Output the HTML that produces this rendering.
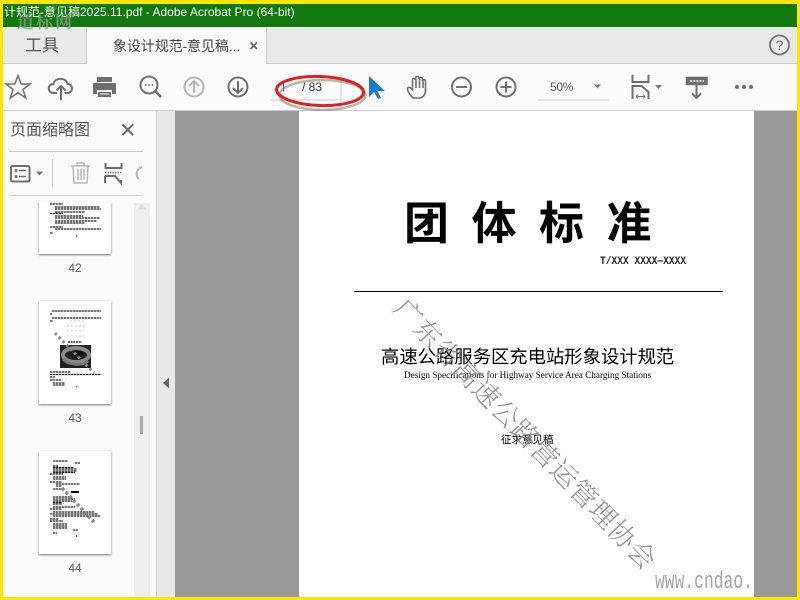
<!DOCTYPE html>
<html><head><meta charset="utf-8"><style>
html,body{margin:0;padding:0;width:800px;height:600px;overflow:hidden;background:#fff}
*{box-sizing:border-box}
.a{position:absolute}
body{font-family:"Liberation Sans","Noto Sans CJK SC",sans-serif;position:relative}
svg{position:absolute;overflow:visible}
.th{position:absolute;left:39px;width:72px;background:#fff;box-shadow:0 1px 2px rgba(0,0,0,.55)}
.n{position:absolute;left:60px;width:30px;text-align:center;font-size:12px;color:#555}
</style></head><body>
<div class="a" style="left:0;top:27px;width:800px;height:37px;background:#e9e9e9;border-bottom:1px solid #ccc"></div>
<div class="a" style="left:0;top:4px;width:800px;height:23px;background:#11790f"></div>
<div class="a" style="left:4px;top:2px;color:#fff;font-size:12px;line-height:20px;white-space:nowrap">计规范-意见稿2025.11.pdf - Adobe Acrobat Pro (64-bit)</div>
<div class="a" style="left:17px;top:10px;color:#8f9f88;font:bold 17px/22px 'Noto Serif CJK SC',serif;letter-spacing:2px;opacity:.8;white-space:nowrap">道标网</div>
<div class="a" style="left:86px;top:28px;width:181px;height:36px;background:#fbfbfb;border-left:1px solid #ccc;border-right:1px solid #ccc"></div>
<div class="a" style="left:25px;top:35px;font-size:17px;line-height:22px;color:#555">工具</div>
<div class="a" style="left:113px;top:37px;font-size:14px;line-height:18px;letter-spacing:-.1px;color:#444;white-space:nowrap">象设计规范-意见稿...</div>
<svg style="left:249px;top:41px" width="10" height="10"><path d="M1.500 1.500L8 8M8 1.500L1.500 8" stroke="#666" stroke-width="1.800"/></svg>
<svg style="left:769px;top:34px" width="22" height="22"><circle cx="10.500" cy="11" r="9.500" fill="none" stroke="#707070" stroke-width="1.800"/><text x="10.500" y="16" text-anchor="middle" font-size="14" fill="#707070" font-family="Liberation Sans">?</text></svg>
<div class="a" style="left:0;top:64px;width:800px;height:46px;background:#fcfcfc"></div>
<div class="a" style="left:0;top:110px;width:800px;height:1px;background:#ccc"></div>

<svg style="left:0;top:70px" width="800" height="36" fill="none" stroke="#6e6e6e" stroke-width="1.800">
<path d="M18 5.500l3.200 8.500h8.800l-7 5.500 2.700 8.500-7.700-5.300-7.700 5.300 2.700-8.500-7-5.500h8.800z" stroke-width="1.500"/>
<path d="M57 23h-3c-7 0-7-9-.500-9 1-7 13-7 14 0 6 0 6 9 0 9h-3" stroke-width="2"/><path d="M61 30V16M56.500 20.500l4.500-4.500 4.500 4.500" stroke-width="2"/>
<g stroke="none" fill="#6e6e6e"><path d="M97 7h15v5H97zM94 13h21a1 1 0 0 1 1 1v10h-4v-4H97v4h-4V14a1 1 0 0 1 1-1z"/><path d="M98 22h13v5H98z" fill="#6e6e6e"/></g><path d="M100 24h9" stroke="#fff" stroke-width="1"/>
<circle cx="149" cy="15" r="8.500" stroke-width="2"/><path d="M155 21l6 6" stroke-width="2.500"/><path d="M145 15h1.500M148.300 15h1.500M151.600 15h1.500" stroke-width="1.800"/>
<g stroke="#b5b5b5" stroke-width="2"><circle cx="194" cy="17" r="9.500"/><path d="M194 23V11M189 16l5-5 5 5"/></g>
<circle cx="238" cy="17" r="9.500" stroke-width="2"/><path d="M238 11v12M233 18l5 5 5-5" stroke-width="2"/>
<path d="M270 30h71M341 3v28" stroke="#ccc" stroke-width="1"/>
<path d="M369 6v21l5-5 4 7 3-1-3.500-7H385z" fill="#1d7cc4" stroke="none"/>
<path d="M412 27c-2-2-4-5-4.500-8 0-2 2-2 3-1l2 2V10c0-2 3-2 3 0V8c0-2 3.500-2 3.500 0v1c0-2 3.500-2 3.500 0v2c0-2 3-2 3 0v9c0 4-2 7-5 8h-6c-1 0-2 0-2.500-1zM416 9v9M419.500 8v10M423 9v9" stroke-width="1.600"/>
<circle cx="461.500" cy="17" r="9.500" stroke-width="2"/><path d="M456 17h11" stroke-width="2"/>
<circle cx="506" cy="17" r="9.500" stroke-width="2"/><path d="M500.500 17h11M506 11.500v11" stroke-width="2"/>
<path d="M538 30h71" stroke="#ccc" stroke-width="1"/>
<path d="M594 14.500h7l-3.500 4z" fill="#777" stroke="none"/>
<path d="M632.500 5v7h16V5M632.500 29V16h9l7 6v7" stroke-width="2"/><path d="M636 26.500h9M636 26.500l2-2M636 26.500l2 2M645 26.500l-2-2M645 26.500l-2 2" stroke-width="1"/>
<path d="M655 15h7l-3.500 4z" fill="#777" stroke="none"/>
<path d="M686.500 7.500h20.500v7h-20.500z" fill="#6e6e6e" stroke-width="1.500"/><path d="M690 11h14" stroke="#fff" stroke-width="1.500" stroke-dasharray="2 1.200"/><path d="M696.500 15v13M692 23.500l4.500 4.500 4.500-4.500" stroke-width="2"/>
<g fill="#6e6e6e" stroke="none"><circle cx="737" cy="17" r="2"/><circle cx="744" cy="17" r="2"/><circle cx="751" cy="17" r="2"/></g>
</svg>
<div class="a" style="left:302px;top:79px;font-size:12px;line-height:16px;color:#333">/ 83</div>
<div class="a" style="left:550px;top:79px;font-size:12px;line-height:16px;letter-spacing:-.3px;color:#555">50%</div>
<div class="a" style="left:283px;top:83px;width:1px;height:8px;background:#557"></div>
<svg style="left:270px;top:70px" width="100" height="44" fill="none"><ellipse cx="51" cy="23" rx="43" ry="15" stroke="#6a5a50" stroke-width="2.500" opacity=".45" transform="translate(1.500 2)"/><ellipse cx="50" cy="21" rx="43.500" ry="14.500" stroke="#e0201f" stroke-width="3" transform="rotate(2 50 21)"/></svg>

<div class="a" style="left:0;top:111px;width:156px;height:486px;background:#fafafa"></div>
<div class="a" style="left:134px;top:203px;width:16px;height:394px;background:#eee"></div>
<div class="a" style="left:156px;top:111px;width:19px;height:486px;background:#e8e8e8;border-left:1px solid #ccc"></div>
<div class="a" style="left:175px;top:111px;width:622px;height:486px;background:#999"></div>
<div class="a" style="left:299px;top:111px;width:455px;height:486px;background:#fff"></div>
<div class="a" style="left:10px;top:120px;font-size:16px;line-height:22px;color:#555;white-space:nowrap">页面缩略图</div>
<svg style="left:121px;top:123px" width="14" height="14"><path d="M1.500 1.500L12 12M12 1.500L1.500 12" stroke="#666" stroke-width="2"/></svg>
<div class="a" style="left:9px;top:151px;width:134px;height:1px;background:#ccc"></div>
<div class="a" style="left:9px;top:195px;width:134px;height:1px;background:#ccc"></div>
<div class="a" style="left:52px;top:159px;width:1px;height:28px;background:#ccc"></div>
<svg style="left:0;top:155px" width="150" height="40" fill="none" stroke="#6e6e6e">
<rect x="11" y="11" width="18.500" height="15.500" rx="1.500" stroke-width="2"/><circle cx="16" cy="15.500" r="1.500" fill="#6e6e6e" stroke="none"/><circle cx="16" cy="21.500" r="1.500" fill="#6e6e6e" stroke="none"/><path d="M19 15.500h7M19 21.500h7" stroke-width="1.500"/>
<path d="M36 16.500h7l-3.500 4z" fill="#777" stroke="none"/>
<g stroke="#b8b8b8" stroke-width="1.500"><path d="M71 11h19M77 11V8h7v3M73 11l1 17h13l1-17M78 14v11M81 14v11M84 14v11"/></g>
<path d="M105.500 8v5h16V8M105 21V28M105 21h10l6 7v-3M105 28" stroke-width="2"/><path d="M105 17.500h16" stroke-width="1.500" stroke-dasharray="1.500 1"/>
<path d="M142 12a7 7 0 0 0-3 12" stroke="#b8b8b8" stroke-width="2"/>
</svg>

<!-- thumbnails -->
<div class="a" style="left:0;top:203px;width:134px;height:394px;overflow:hidden">
<div class="th" style="top:-97px;height:148px"></div>
<div class="th" style="top:98px;height:103px"></div>
<div class="th" style="top:248px;height:103px"></div>
<svg style="left:0;top:0" width="134" height="394" fill="none" stroke="#000" stroke-width="1.200">
<g stroke-dasharray="2.500 .5" opacity=".85"><path d="M50 1h13M55 4h45M55 6h46M55 9h30M50 10.500h13M55 13h28M55 15h45M55 18h42M55 20h30M50 24h13M55 26h46M50 30h3"/></g>
<path d="M76 33h1.200"/>
<g stroke-dasharray="2.500 .5" opacity=".85"><path d="M52 108h49M50 111h2M52 115h49M50 118h3M50 169h21M50 171.500h51M50 174h5M50 177h11M53 180h12M53 182h12"/></g>
<path d="M76 183.500h1.200"/>
<g stroke="#ccc" stroke-dasharray="2 2" stroke-width="1"><path d="M70 118h15M67 123h18M67 128h17M67 133h18"/></g>
<path d="M68 139h14" stroke-dasharray="2 .7"/>
<g stroke-dasharray="2.500 .5" opacity=".85"><path d="M53 258h15M75 260h5M53 263h5M53 264.500h21M53 266h24M53 268h24M53 269.500h22M50 271h13M53 274h13M53 276h13M50 279h12M56 281h24M56 283h6M53 286h12M53 294h17M53 296h22M53 298h19M53 299.500h9M53 301h9M53 304h22M50 306h12M53 309h41M50 311h48M53 313h47M50 316h8M50 318h13M53 321h14M53 323h14M53 325h14M73 327h5M53 330h4"/></g>
<path d="M76 333h1.200"/>
<path d="M71 289h8" stroke-width="2"/>
<path d="M62 285l32 34" stroke="#8a8a8a" stroke-width="3.500" stroke-dasharray="3 2.500"/>
</svg>
<div class="a" style="left:60px;top:142px;width:31px;height:23px;background:#1f1f1f"></div>
<svg style="left:60px;top:142px" width="31" height="23" fill="none"><ellipse cx="16" cy="10" rx="13" ry="7" stroke="#8a8a8a" stroke-width="4"/><ellipse cx="18" cy="8" rx="5" ry="2.500" fill="#111"/><path d="M3 14c5 6 18 7 25 2" stroke="#777" stroke-width="3"/></svg>
<svg style="left:0;top:0" width="134" height="394" fill="none"><path d="M55 130l39 40" stroke="#888" stroke-width="3" stroke-dasharray="2.500 3"/></svg>
</div>
<div class="n" style="top:261px">42</div>
<div class="n" style="top:411px">43</div>
<div class="n" style="top:561px">44</div>
<svg style="left:134px;top:203px" width="16" height="394"><path d="M8 .5l-4.500 8h9z" fill="#ddd" transform="translate(0 .5) scale(1 .7)"/></svg>
<div class="a" style="left:140px;top:416px;width:3px;height:18px;background:#aaa"></div>
<svg style="left:162px;top:376px" width="8" height="14"><path d="M7 1.500V12.500L1 7z" fill="#666"/></svg>

<!-- document -->
<div class="a" style="left:404px;top:192px;font:bold 45px/56px 'Noto Sans CJK SC',sans-serif;color:#000;letter-spacing:22.500px;white-space:nowrap">团体标准</div>
<div class="a" style="left:600px;top:255px;font:bold 11px/14px 'Liberation Mono',monospace;color:#222;white-space:pre;transform-origin:0 0;transform:scaleX(.87)">T/XXX XXXX—XXXX</div>
<div class="a" style="left:354px;top:291px;width:369px;height:1px;background:#000"></div>
<div class="a" style="left:381px;top:343px;font:18.330px/26px 'Noto Sans CJK SC',sans-serif;color:#000;white-space:nowrap">高速公路服务区充电站形象设计规范</div>
<div class="a" style="left:404px;top:368px;font:9.200px/14px 'Liberation Serif',serif;color:#000;white-space:nowrap">Design Specifications for Highway Service Area Charging Stations</div>
<div class="a" style="left:501px;top:432px;font:10.500px/15px 'Noto Sans CJK SC',sans-serif;color:#000;white-space:nowrap">征求意见稿</div>
<div class="a" style="left:396px;top:294px;font:300 27px/36px 'Noto Serif CJK SC',serif;color:#8b8b8b;white-space:nowrap;transform-origin:13.500px 18px;transform:rotate(46deg);letter-spacing:1px;opacity:.95">广东省高速公路营运管理协会</div>
<div class="a" style="left:655px;top:568px;font:24px/30px 'Liberation Mono',monospace;color:#a5a5a5;white-space:nowrap;transform-origin:0 0;transform:scaleX(.68)">www.cndao.</div>

<!-- yellow frame -->
<div class="a" style="left:0;top:0;width:800px;height:4px;background:#ffe600"></div>
<div class="a" style="left:0;top:0;width:3px;height:600px;background:#ffe600"></div>
<div class="a" style="left:797px;top:0;width:3px;height:600px;background:#ffe600"></div>
<div class="a" style="left:0;top:597px;width:800px;height:3px;background:#ffe600"></div>
</body></html>
